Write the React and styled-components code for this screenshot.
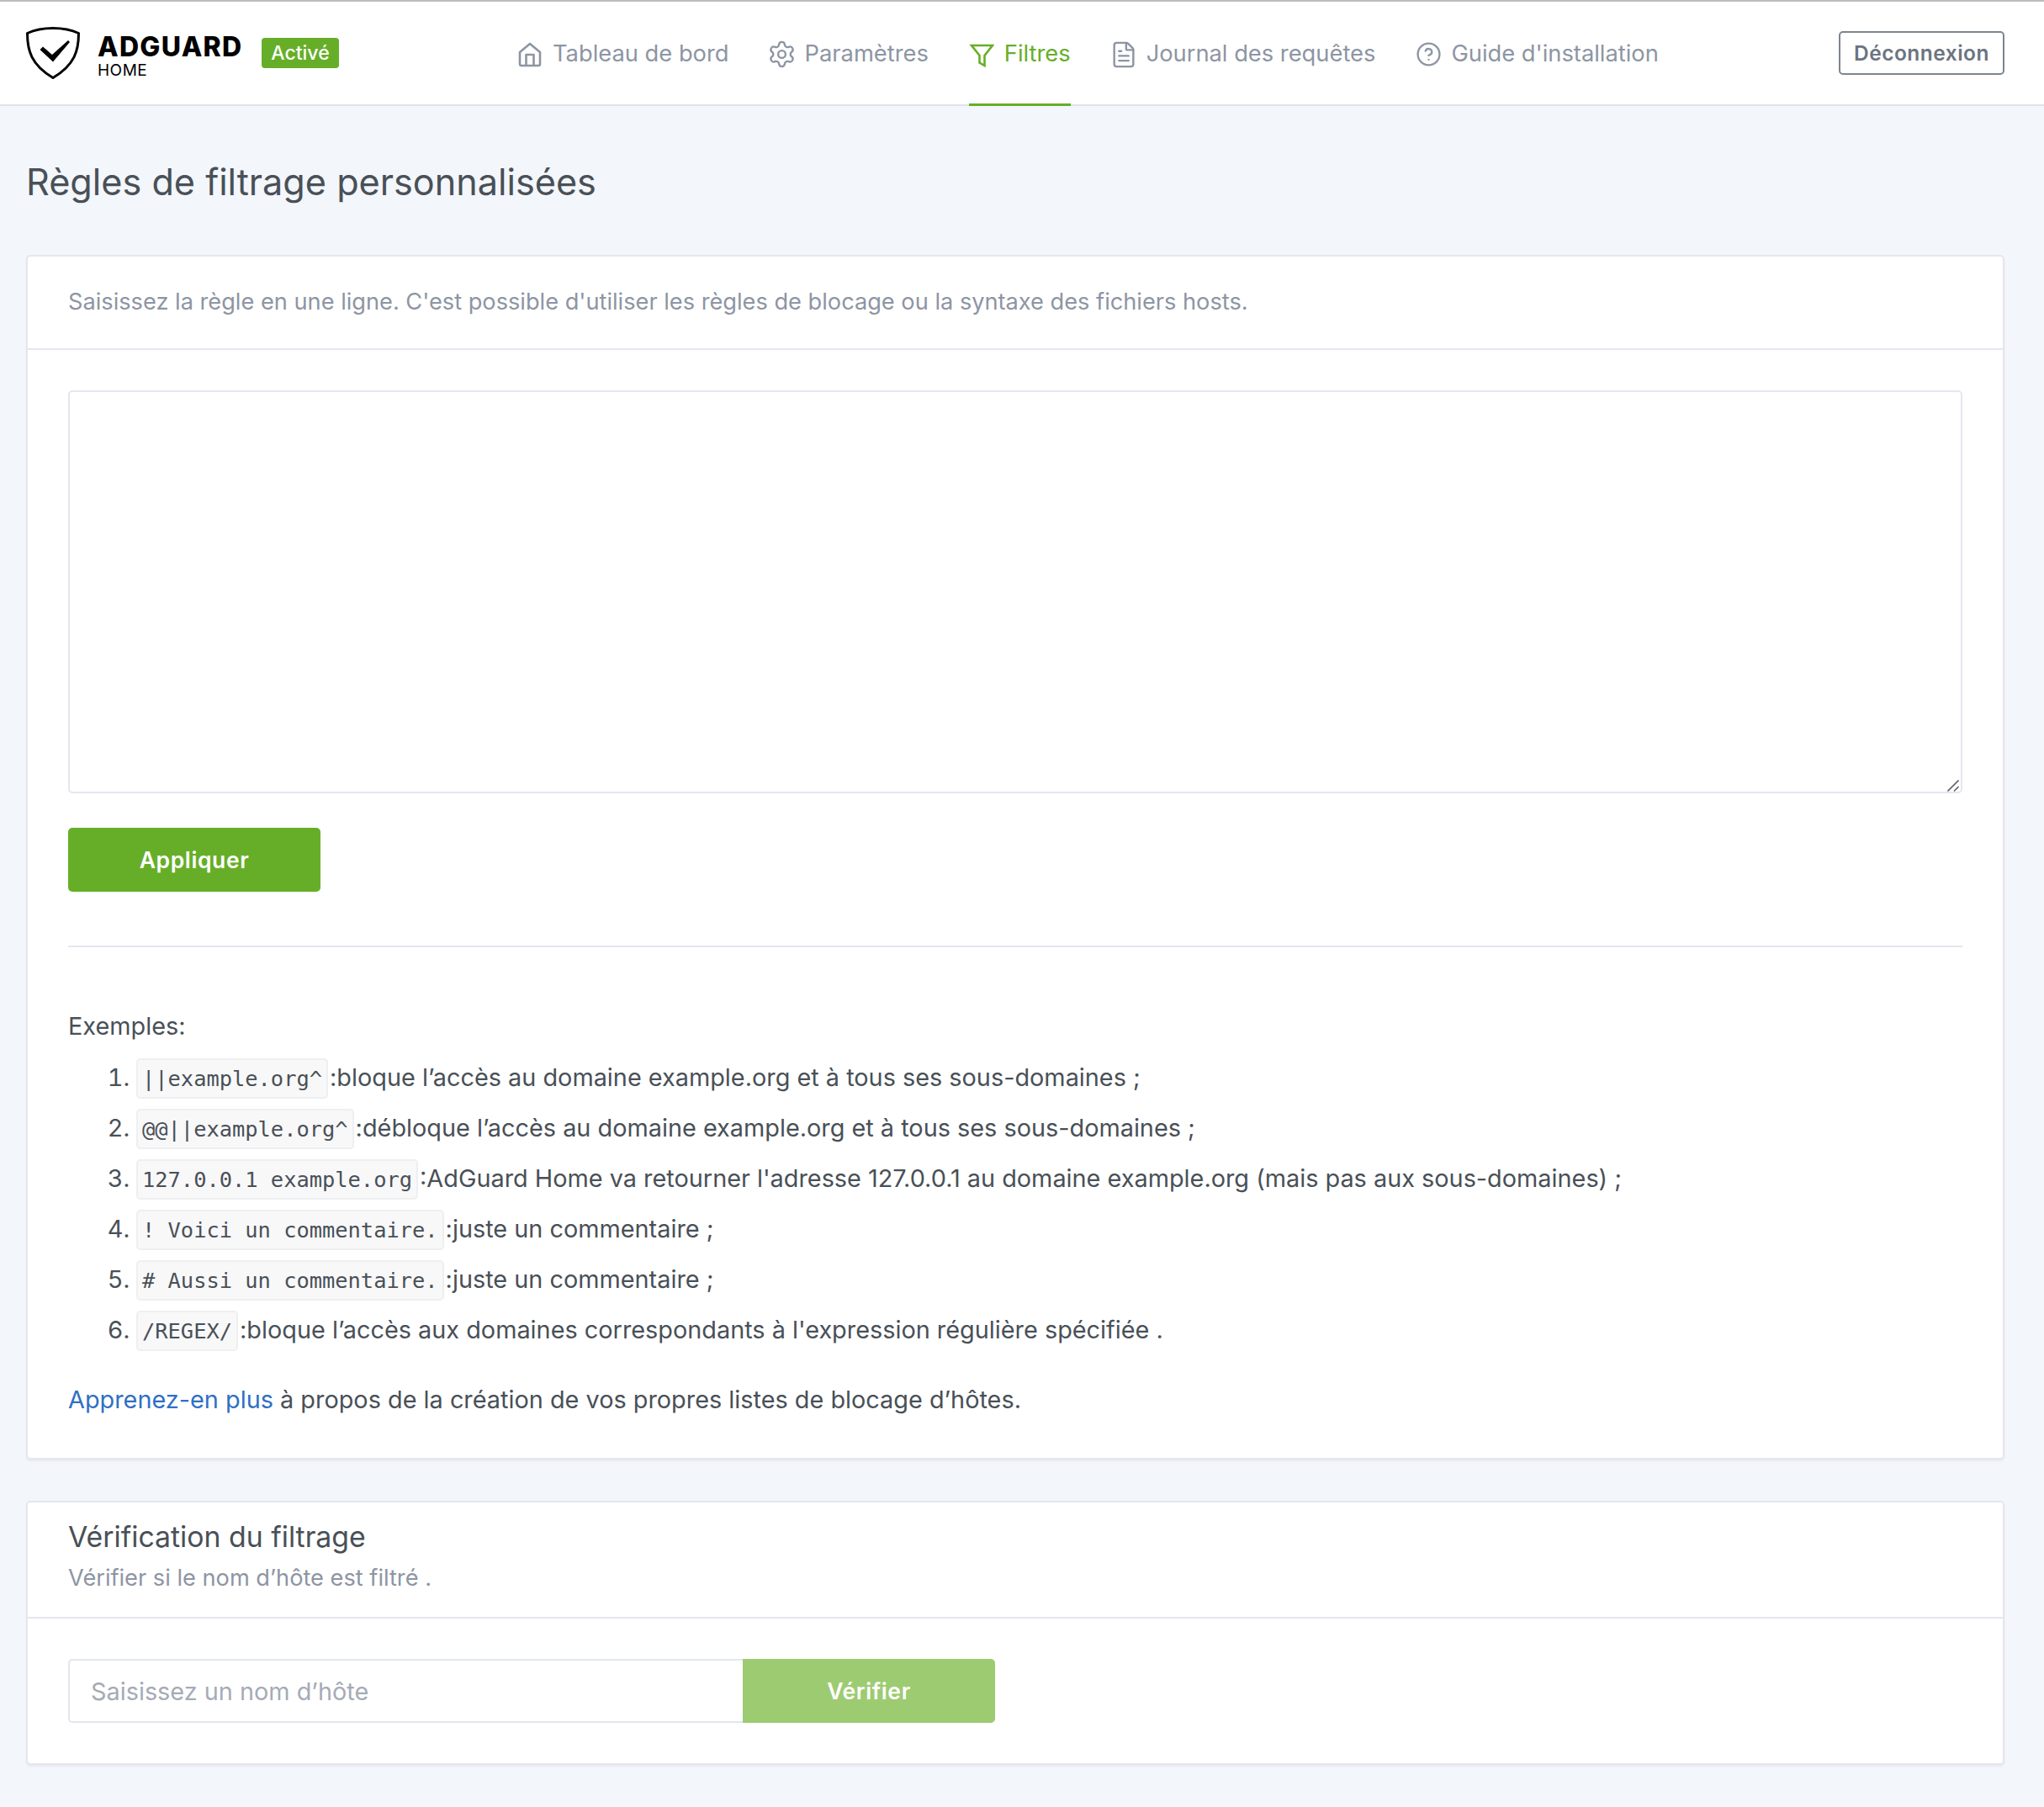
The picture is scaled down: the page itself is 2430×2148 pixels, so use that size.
import styled, { createGlobalStyle } from "styled-components";
import { Settings, FileText, CircleHelp } from "lucide-react";

const GlobalStyle = createGlobalStyle`
  * {
    box-sizing: border-box;
  }
  body {
    margin: 0;
    background: #f3f6fb;
    color: #495057;
    font-family: Inter, "Noto Sans", sans-serif;
    font-size: 28.850px;
    line-height: 1.5;
  }
`;

const Page = styled.div`
  min-height: 2148px;
  background: #f3f6fb;
`;

const Header = styled.header`
  height: 126px;
  padding: 0 47px 0 31px;
  display: flex;
  align-items: center;
  justify-content: space-between;
  background: #fff;
  border-top: 2px solid #bdbdbd;
  border-bottom: 2px solid #dee3ea;
`;

const Brand = styled.div`
  display: flex;
  align-items: center;
  flex: none;
  width: 584px;
`;

const LogoMark = styled.svg`
  width: 64px;
  height: 62px;
  flex: none;
`;

const LogoText = styled.div`
  width: 172px;
  margin: 9px 0 0 21px;
  color: #000;
  display: flex;
  flex-direction: column;
`;

const LogoName = styled.span`
  font-size: 32px;
  font-weight: 800;
  line-height: 32px;
  letter-spacing: 1.300px;
`;

const LogoSub = styled.span`
  font-size: 19px;
  line-height: 24px;
  letter-spacing: 0.5px;
`;

const Badge = styled.span`
  margin-left: 23px;
  width: 92px;
  height: 36px;
  display: flex;
  align-items: center;
  justify-content: center;
  background: #66ae28;
  color: #fff;
  font-size: 23px;
  font-weight: 500;
  border-radius: 4px;
`;

const Nav = styled.nav`
  display: flex;
  gap: 48px;
  align-self: stretch;
  flex: 1;
`;

const NavItem = styled.a`
  display: flex;
  align-items: center;
  gap: 12px;
  margin-bottom: -2px;
  padding-top: 4px;
  font-size: 27.300px;
  color: ${(p) => (p.$active ? "#66ae28" : "#8d95a3")};
  border-bottom: 3px solid ${(p) => (p.$active ? "#66ae28" : "transparent")};
`;

const NavIcon = styled.span`
  width: 30px;
  display: flex;
  justify-content: center;
  svg {
    flex: none;
  }
`;

const LogoutButton = styled.button`
  width: 197px;
  height: 52px;
  padding: 0;
  flex: none;
  background: #fff;
  border: 2px solid #7c858e;
  border-radius: 5px;
  color: #6b7480;
  font-family: inherit;
  font-size: 24.500px;
  font-weight: 600;
  letter-spacing: 0.5px;
`;

const Main = styled.main`
  padding: 0 47px 0 31px;
`;

const PageTitle = styled.h1`
  margin: 0;
  padding: 61px 0 58px;
  font-size: 43.200px;
  font-weight: 400;
  line-height: 58px;
  color: #495057;
`;

const Card = styled.section`
  margin-bottom: 49px;
  background: #fff;
  border: 2px solid #e3e7ee;
  border-radius: 5px;
  box-shadow: 0 2px 3px rgba(0, 0, 0, 0.05);
`;

const CardHeader = styled.div`
  padding: ${(p) => p.$padding};
  border-bottom: 2px solid #e3e7ee;
`;

const CardBody = styled.div`
  padding: 48px;
`;

const Hint = styled.div`
  margin-top: ${(p) => p.$top || "0"};
  color: #8d95a3;
  font-size: 27.200px;
  line-height: 44px;
`;

const CardTitle = styled.h2`
  margin: 0;
  font-size: 33.800px;
  font-weight: 400;
  line-height: 44px;
  color: #495057;
`;

const RulesWrap = styled.div`
  position: relative;
`;

const RulesArea = styled.textarea`
  display: block;
  width: 100%;
  height: 479px;
  background: #fff;
  border: 2px solid #e3e7ee;
  border-radius: 5px;
  outline: none;
  resize: none;
`;

const ResizeGrip = styled.svg`
  position: absolute;
  right: 4px;
  bottom: 2px;
  width: 14px;
  height: 14px;
`;

const Button = styled.button`
  display: block;
  height: 76px;
  width: 300px;
  padding: 0;
  flex: none;
  background: ${(p) => (p.$muted ? "#9dcb72" : "#66ae28")};
  border: none;
  border-radius: ${(p) => (p.$joined ? "0 5px 5px 0" : "5px")};
  color: #fff;
  font-family: inherit;
  font-size: 26.500px;
  font-weight: 600;
  letter-spacing: 0.6px;
`;

const ApplyRow = styled.div`
  margin-top: 41px;
  padding-bottom: 64px;
  border-bottom: 2px solid #e3e7ee;
`;

const Examples = styled.div`
  margin-top: 72px;
  line-height: 44px;
`;

const ExampleList = styled.ol`
  margin: 9px 0 0;
  padding-left: 81px;
`;

const ExampleItem = styled.li`
  height: 60px;
  line-height: 60px;
`;

const Code = styled.code`
  margin-right: 2px;
  padding: 7px 5px;
  background: #f8f8f9;
  border: 2px solid #eeeff1;
  border-radius: 5px;
  color: #495057;
  font-family: "DejaVu Sans Mono", "Liberation Mono", monospace;
  font-size: 25.400px;
`;

const LearnMore = styled.p`
  margin: 31px 0 -1px;
  line-height: 44px;
`;

const Link = styled.a`
  color: #2f6fc4;
`;

const HostForm = styled.div`
  display: flex;
  width: 1102px;
`;

const HostInput = styled.input`
  flex: 1;
  min-width: 0;
  height: 76px;
  padding: 0 25px;
  background: #fff;
  border: 2px solid #e3e7ee;
  border-right: none;
  border-radius: 5px 0 0 5px;
  color: #495057;
  font-family: inherit;
  font-size: 28.850px;
  outline: none;
  &::placeholder {
    color: #a5abb6;
    opacity: 1;
  }
`;

const HomeIcon = () => (
  <svg width="30" height="32" viewBox="0 0 30 32" fill="none" stroke="currentColor" strokeWidth="2.600" strokeLinejoin="round">
    <path d="M3 13 15 3l12 10v14a2 2 0 0 1-2 2H5a2 2 0 0 1-2-2z" />
    <path d="M10.500 29V16h9v13" />
  </svg>
);

const FilterIcon = () => (
  <svg width="30" height="30" viewBox="0 0 30 30" fill="none" stroke="currentColor" strokeWidth="2.600" strokeLinejoin="miter">
    <path d="M3 4h25L18.500 16v12l-6-3.500V16z" />
  </svg>
);

const App = () => {
  return (
    <Page>
      <GlobalStyle />
      <Header>
        <Brand>
          <LogoMark viewBox="0 0 64 62" fill="none">
            <path
              d="M32 1.500C21 1.500 10 3.500 1.500 7.500 1.500 28 6 45 32 60.500 58 45 62.500 28 62.500 7.500 54 3.500 43 1.500 32 1.500z"
              stroke="#000"
              strokeWidth="3"
              strokeLinejoin="round"
            />
            <path d="M16.500 27 20 23.500 31 33 50 16l2 2-20 23.500z" fill="#000" />
          </LogoMark>
          <LogoText>
            <LogoName>ADGUARD</LogoName>
            <LogoSub>HOME</LogoSub>
          </LogoText>
          <Badge>Activé</Badge>
        </Brand>
        <Nav>
          <NavItem>
            <NavIcon>
              <HomeIcon />
            </NavIcon>
            Tableau de bord
          </NavItem>
          <NavItem>
            <NavIcon>
              <Settings size={35} strokeWidth={1.6} />
            </NavIcon>
            Paramètres
          </NavItem>
          <NavItem $active>
            <NavIcon>
              <FilterIcon />
            </NavIcon>
            Filtres
          </NavItem>
          <NavItem>
            <NavIcon>
              <FileText size={34} strokeWidth={1.7} />
            </NavIcon>
            Journal des requêtes
          </NavItem>
          <NavItem>
            <NavIcon>
              <CircleHelp size={31} strokeWidth={1.8} />
            </NavIcon>
            Guide d'installation
          </NavItem>
        </Nav>
        <LogoutButton>Déconnexion</LogoutButton>
      </Header>
      <Main>
        <PageTitle>Règles de filtrage personnalisées</PageTitle>
        <Card>
          <CardHeader $padding="32px 48px 33px">
            <Hint>
              Saisissez la règle en une ligne. C'est possible d'utiliser les règles de blocage ou la syntaxe des fichiers hosts.
            </Hint>
          </CardHeader>
          <CardBody>
            <RulesWrap>
              <RulesArea />
              <ResizeGrip viewBox="0 0 14 14" stroke="#666" strokeWidth="1.600">
                <path d="M0.500 13.500 13.500 0.500M8 13.500l5.500-5.500" />
              </ResizeGrip>
            </RulesWrap>
            <ApplyRow>
              <Button>Appliquer</Button>
            </ApplyRow>
            <Examples>
              Exemples:
              <ExampleList>
                <ExampleItem>
                  <Code>||example.org^</Code>:bloque l’accès au domaine example.org et à tous ses sous-domaines ;
                </ExampleItem>
                <ExampleItem>
                  <Code>@@||example.org^</Code>:débloque l’accès au domaine example.org et à tous ses sous-domaines ;
                </ExampleItem>
                <ExampleItem>
                  <Code>127.0.0.1 example.org</Code>:AdGuard Home va retourner l'adresse 127.0.0.1 au domaine example.org (mais pas aux sous-domaines) ;
                </ExampleItem>
                <ExampleItem>
                  <Code>! Voici un commentaire.</Code>:juste un commentaire ;
                </ExampleItem>
                <ExampleItem>
                  <Code># Aussi un commentaire.</Code>:juste un commentaire ;
                </ExampleItem>
                <ExampleItem>
                  <Code>/REGEX/</Code>:bloque l’accès aux domaines correspondants à l'expression régulière spécifiée .
                </ExampleItem>
              </ExampleList>
            </Examples>
            <LearnMore>
              <Link>Apprenez-en plus</Link> à propos de la création de vos propres listes de blocage d’hôtes.
            </LearnMore>
          </CardBody>
        </Card>
        <Card>
          <CardHeader $padding="19px 48px 24px">
            <CardTitle>Vérification du filtrage</CardTitle>
            <Hint $top="5px">Vérifier si le nom d’hôte est filtré .</Hint>
          </CardHeader>
          <CardBody>
            <HostForm>
              <HostInput placeholder="Saisissez un nom d’hôte" />
              <Button $muted $joined>
                Vérifier
              </Button>
            </HostForm>
          </CardBody>
        </Card>
      </Main>
    </Page>
  );
};

export default App;
